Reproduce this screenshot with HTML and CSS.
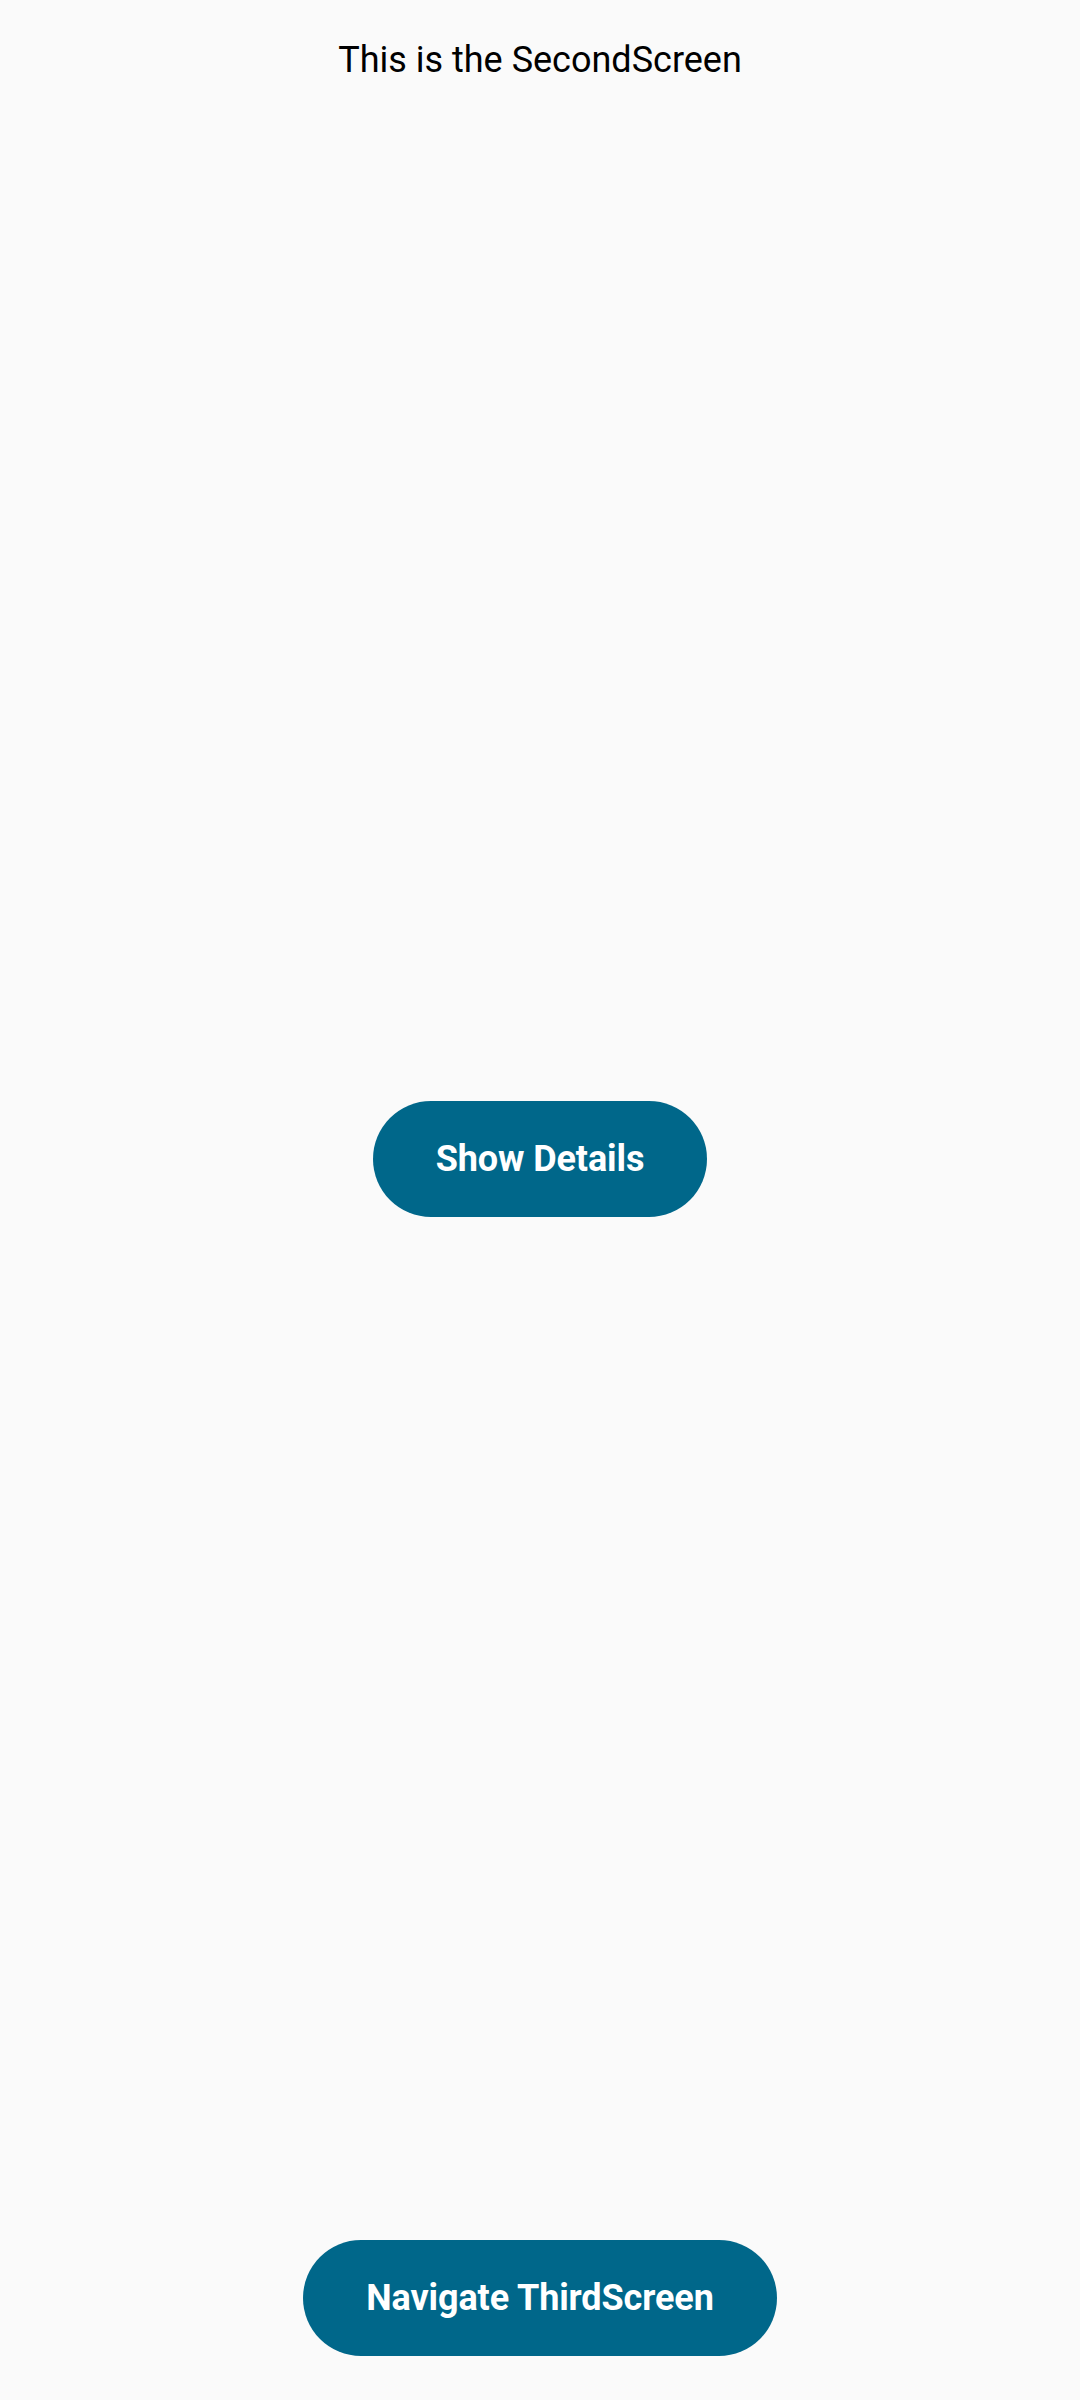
FILE: index.html
```html
<!DOCTYPE html>
<html>
<head>
<meta charset="utf-8">
<link rel="stylesheet" href="styles.css">
</head>
<body>
<div class="screen">
  <div class="title">This is the SecondScreen</div>
  <div class="middle">
    <button class="pill">Show Details</button>
  </div>
  <div class="bottom">
    <button class="pill">Navigate ThirdScreen</button>
  </div>
</div>
</body>
</html>
```
FILE: styles.css
```css
html, body {
  margin: 0;
  padding: 0;
  background: #fafafa;
}
.screen {
  width: 1080px;
  height: 2400px;
  display: flex;
  flex-direction: column;
  font-family: Roboto, "Noto Sans", sans-serif;
}
.title {
  padding-top: 39px;
  font-size: 36px;
  line-height: 42px;
  color: #000;
  text-align: center;
}
.middle {
  flex: 1;
  display: flex;
  align-items: center;
  justify-content: center;
  padding-bottom: 3px;
}
.bottom {
  display: flex;
  justify-content: center;
  padding-bottom: 44px;
}
.pill {
  height: 116px;
  padding: 0 63px;
  border: none;
  border-radius: 58px;
  background: #00678a;
  color: #fff;
  font-family: Roboto, "Noto Sans", sans-serif;
  font-weight: 700;
  font-size: 36px;
  line-height: 42px;
  letter-spacing: -0.1px;
}
```
